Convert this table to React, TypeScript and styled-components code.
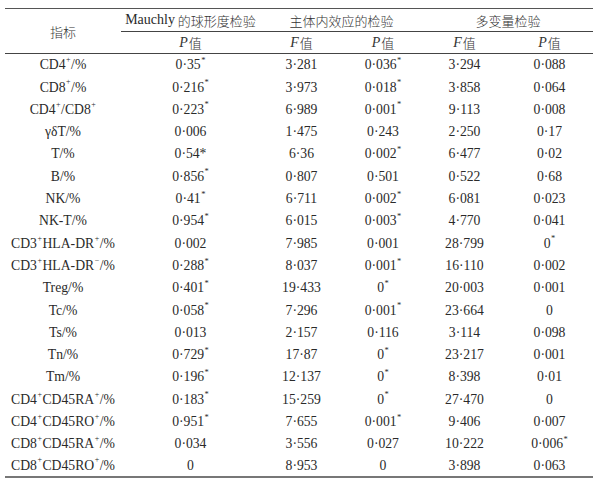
import React from 'react';
import styled, { createGlobalStyle } from 'styled-components';

const GlobalStyle = createGlobalStyle`
    html, body {
        margin: 0;
        padding: 0;
        background: #ffffff;
    }
    body {
        font-family: "Liberation Serif", "Noto Sans CJK SC", serif;
        color: #2a2a2a;
    }
`;

// each row: label, Mauchly P, F, P, F, P
// "{+}" / "{-}" = superscript sign, trailing "^" = superscript star
const rows: string[][] = [
    ['CD4{+}/%', '0·35^', '3·281', '0·036^', '3·294', '0·088'],
    ['CD8{+}/%', '0·216^', '3·973', '0·018^', '3·858', '0·064'],
    ['CD4{+}/CD8{+}', '0·223^', '6·989', '0·001^', '9·113', '0·008'],
    ['γδT/%', '0·006', '1·475', '0·243', '2·250', '0·17'],
    ['T/%', '0·54*', '6·36', '0·002^', '6·477', '0·02'],
    ['B/%', '0·856^', '0·807', '0·501', '0·522', '0·68'],
    ['NK/%', '0·41^', '6·711', '0·002^', '6·081', '0·023'],
    ['NK-T/%', '0·954^', '6·015', '0·003^', '4·770', '0·041'],
    ['CD3{+}HLA-DR{+}/%', '0·002', '7·985', '0·001', '28·799', '0^'],
    ['CD3{+}HLA-DR{-}/%', '0·288^', '8·037', '0·001^', '16·110', '0·002'],
    ['Treg/%', '0·401^', '19·433', '0^', '20·003', '0·001'],
    ['Tc/%', '0·058^', '7·296', '0·001^', '23·664', '0'],
    ['Ts/%', '0·013', '2·157', '0·116', '3·114', '0·098'],
    ['Tn/%', '0·729^', '17·87', '0^', '23·217', '0·001'],
    ['Tm/%', '0·196^', '12·137', '0^', '8·398', '0·01'],
    ['CD4{+}CD45RA{+}/%', '0·183^', '15·259', '0^', '27·470', '0'],
    ['CD4{+}CD45RO{+}/%', '0·951^', '7·655', '0·001^', '9·406', '0·007'],
    ['CD8{+}CD45RA{+}/%', '0·034', '3·556', '0·027', '10·222', '0·006^'],
    ['CD8{+}CD45RO{+}/%', '0', '8·953', '0', '3·898', '0·063'],
];

const renderLabel = (s: string) =>
    s.split(/(\{[+-]\})/).map((part, i) =>
        part.startsWith('{') ? <Sup key={i}>{part[1] === '-' ? '−' : '+'}</Sup> : part
    );

const renderValue = (s: string) =>
    s.endsWith('^') ? (
        <>
            {s.slice(0, -1)}
            <Star>*</Star>
        </>
    ) : (
        s
    );

const App: React.FC = () => (
    <>
        <GlobalStyle />
        <Page>
            <Table>
                <IndexHead>指标</IndexHead>
                <GroupHead><Latin>Mauchly</Latin> 的球形度检验</GroupHead>
                <GroupHead $span={2}>主体内效应的检验</GroupHead>
                <GroupHead $span={2}>多变量检验</GroupHead>

                <SubHead><Ital>P</Ital>值</SubHead>
                <SubHead><Ital>F</Ital>值</SubHead>
                <SubHead><Ital>P</Ital>值</SubHead>
                <SubHead><Ital>F</Ital>值</SubHead>
                <SubHead><Ital>P</Ital>值</SubHead>

                {rows.map((r, i) => (
                    <React.Fragment key={i}>
                        <Cell $last={i === rows.length - 1}>{renderLabel(r[0])}</Cell>
                        {r.slice(1).map((v, j) => (
                            <Cell key={j} $last={i === rows.length - 1}>{renderValue(v)}</Cell>
                        ))}
                    </React.Fragment>
                ))}
            </Table>
        </Page>
    </>
);

export default App;

const Page = styled.div`
    padding: 8px 0 0 5px;
`;

const Table = styled.div`
    display: grid;
    grid-template-columns: 116px 139px 83px 80px 83px 87px;
    grid-template-rows: 23px 22px;
    grid-auto-rows: 22.3px;
    width: 588px;
    border-top: 1px solid #555;
    font-size: 13.7px;
    line-height: 1;
`;

const HeadBase = styled.div`
    display: flex;
    align-items: center;
    justify-content: center;
    white-space: pre;
    font-family: "Noto Sans CJK SC", "Liberation Serif", sans-serif;
    font-size: 13px;
    font-weight: 300;
    color: #333;
`;

const IndexHead = styled(HeadBase)`
    grid-row: span 2;
    border-bottom: 1px solid #444;
`;

const GroupHead = styled(HeadBase)<{ $span?: number }>`
    grid-column: span ${(p) => p.$span ?? 1};
    border-bottom: 1px solid #444;
`;

const SubHead = styled(HeadBase)`
    border-bottom: 1px solid #444;
`;

const Latin = styled.span`
    font-family: "Liberation Serif", serif;
    font-size: 14px;
    font-weight: 400;
    color: #2a2a2a;
`;

const Ital = styled.i`
    font-family: "Liberation Serif", serif;
    font-size: 14px;
    font-weight: 400;
    margin-right: 1px;
`;

const Cell = styled.div<{ $last?: boolean }>`
    display: flex;
    align-items: center;
    justify-content: center;
    white-space: nowrap;
    border-bottom: ${(p) => (p.$last ? '2px solid #777' : 'none')};
`;

const Sup = styled.span`
    font-size: 8px;
    position: relative;
    top: -5px;
    margin: 0 0.5px;
`;

const Star = styled.span`
    font-size: 8.5px;
    position: relative;
    top: -5px;
    margin-left: 0.5px;
`;
